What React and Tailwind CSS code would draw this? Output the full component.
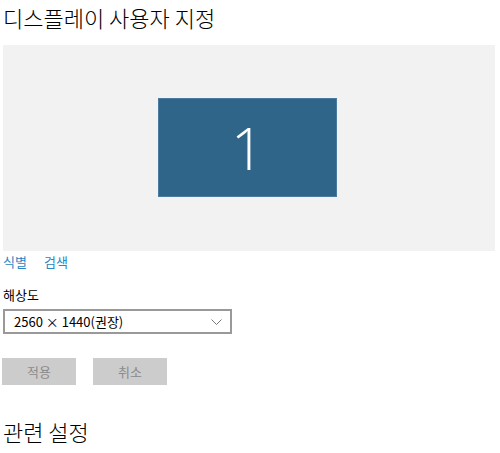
import React from "react";

const font = { fontFamily: '"Noto Sans CJK KR", "Noto Sans", sans-serif' };

const Chevron = () => (
  <svg width="11" height="6" viewBox="0 0 11 6" fill="none">
    <path d="M0.5 0.5 L5.5 5.5 L10.5 0.5" stroke="#777" strokeWidth="1" />
  </svg>
);

export default function App() {
  return (
    <div
      className="w-[500px] h-[453px] bg-white text-black overflow-hidden"
      style={font}
    >
      <h1 className="pl-[3px] pt-[2px] h-[45px] text-[22px] leading-[30px] font-light">
        디스플레이 사용자 지정
      </h1>

      <div className="ml-[3px] w-[492px] h-[206px] bg-[#f2f2f2] flex items-center justify-center pr-[3px] pb-[1px]">
        <div className="w-[179px] h-[99px] bg-[#2e6589] border border-[#4a7ba0] flex items-center justify-center">
          <span
            className="text-white text-[58px] leading-none"
            style={{ fontFamily: '"Open Sans", "Noto Sans", sans-serif', fontWeight: 300 }}
          >
            1
          </span>
        </div>
      </div>

      <div className="flex gap-[17px] pl-[3px] mt-[1px] h-[22px] text-[13px] leading-[20px] text-[#2b86c5]">
        <span>식별</span>
        <span>검색</span>
      </div>

      <div className="pl-[3px] mt-[11px] text-[13px] leading-[20px]">해상도</div>

      <div className="ml-[3px] mt-[4px] w-[229px] h-[25px] border-2 border-[#999] flex items-center justify-between pl-[9px] pr-[8px] text-[13px]">
        <span>2560 × 1440(권장)</span>
        <Chevron />
      </div>

      <div className="flex gap-[17px] ml-[2px] mt-[24px]">
        <button className="w-[74px] h-[27px] bg-[#cccccc] text-[#8a8a8a] text-[13px]">
          적용
        </button>
        <button className="w-[74px] h-[27px] bg-[#cccccc] text-[#8a8a8a] text-[13px]">
          취소
        </button>
      </div>

      <h2 className="pl-[3px] mt-[31px] text-[22px] leading-[30px] font-light">
        관련 설정
      </h2>
    </div>
  );
}
